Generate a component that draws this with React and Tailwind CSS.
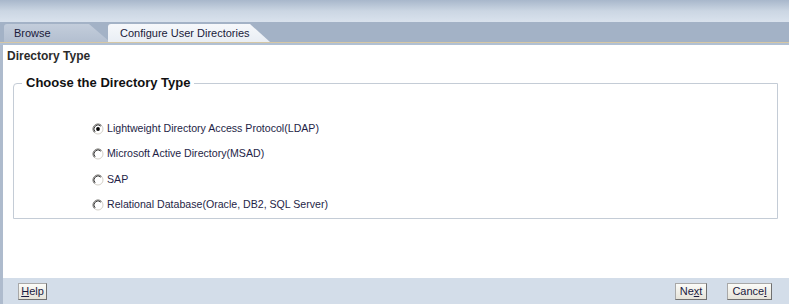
import React, { useState } from "react";

const Radio = ({ checked }) => (
  <svg width="12" height="12" viewBox="0 0 12 12" className="shrink-0">
    <circle cx="6" cy="6" r="5" fill="#ffffff" stroke="#d4d0c8" strokeWidth="1" />
    <path d="M2.46 9.54 A5 5 0 0 1 9.54 2.46" fill="none" stroke="#808080" strokeWidth="1" />
    <path d="M3.17 8.83 A4 4 0 0 1 8.83 3.17" fill="none" stroke="#404040" strokeWidth="1" />
    {checked && <circle cx="6" cy="6" r="1.9" fill="#000000" />}
  </svg>
);

const options = [
  "Lightweight Directory Access Protocol(LDAP)",
  "Microsoft Active Directory(MSAD)",
  "SAP",
  "Relational Database(Oracle, DB2, SQL Server)",
];

const Btn = ({ w, children }) => (
  <button
    className={`${w} h-[17px] flex items-center justify-center bg-gradient-to-b from-[#fbfbf8] to-[#e6e4da] border border-[#a8a8a8] border-r-[#707070] border-b-[#707070] text-[11px] leading-none text-[#1a1a40]`}
  >
    {children}
  </button>
);

const App = () => {
  const [selected, setSelected] = useState(0);

  return (
    <div className="w-[789px] h-[304px] flex flex-col bg-white overflow-hidden font-['Liberation_Sans',Arial,sans-serif]">
      <div className="h-[22px] bg-gradient-to-b from-[#a8b7cb] via-[#cbd6e3] to-[#d9e2ed]" />
      <div className="h-[20px] bg-[#a3b2c6] flex items-end pl-[4px]">
        <div className="relative w-[106px] h-[18px] bg-gradient-to-b from-[#c3cddb] to-[#b3bfd0] rounded-tl-[3px] [clip-path:polygon(0_0,85px_0,106px_100%,0_100%)] text-[11px] text-[#1a1a3a] pl-[10px] leading-[18px]">
          Browse
        </div>
        <div className="relative -ml-[2px] w-[162px] h-[18px] bg-gradient-to-b from-[#f6f8fb] to-[#e9eef4] rounded-tl-[3px] [clip-path:polygon(0_0,142px_0,162px_100%,0_100%)] text-[11px] text-[#1a1a3a] pl-[12px] leading-[19px]">
          Configure User Directories
        </div>
      </div>
      <div className="h-[1px] bg-[#d6c7a4]" />
      <div className="h-[2px] bg-[#b1c0d3]" />
      <div className="flex-1 flex flex-col border-l-[3px] border-[#aebbcd]">
        <div className="pl-[4px] pt-[4px] text-[12px] font-bold text-[#2b2b2b] leading-[14px]">
          Directory Type
        </div>
        <fieldset className="ml-[10px] mr-[11px] mt-[13px] h-[143px] border border-[#c4ccd6] rounded-tl-[4px] px-0">
          <legend className="ml-[8px] px-[4px] text-[13px] font-bold text-[#111111] leading-[14px]">
            Choose the Directory Type
          </legend>
          <div className="flex flex-col gap-[10.5px] pl-[78px] pt-[31px]">
            {options.map((o, i) => (
              <label
                key={o}
                onClick={() => setSelected(i)}
                className="flex items-center gap-[3px] h-[15px] text-[10.6px] text-[#1e1e46] cursor-pointer"
              >
                <Radio checked={selected === i} />
                <span>{o}</span>
              </label>
            ))}
          </div>
        </fieldset>
      </div>
      <div className="h-[26px] bg-[#d3dde9] border-l-[3px] border-[#aebbcd] flex items-center pl-[15px] pr-[17px]">
        <Btn w="w-[29px]">
          <span className="underline">H</span>elp
        </Btn>
        <div className="flex-1" />
        <Btn w="w-[32px]">
          Ne<span className="underline">x</span>t
        </Btn>
        <div className="w-[20px]" />
        <Btn w="w-[45px]">
          Cance<span className="underline">l</span>
        </Btn>
      </div>
    </div>
  );
};

export default App;
